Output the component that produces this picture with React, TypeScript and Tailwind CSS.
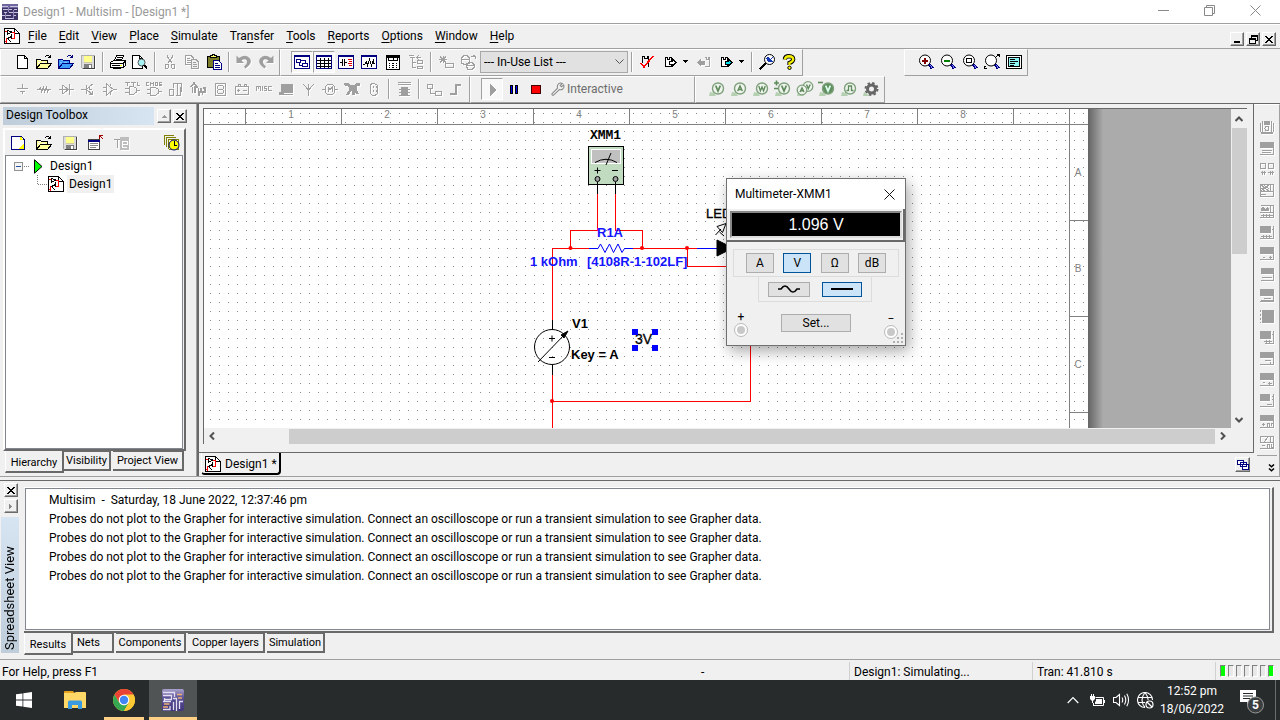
import React from "react";
import type { ReactNode } from "react";

type PProps = { d: string; c?: string; f?: string; w?: number };
const P = ({ d, c = "#000", f = "none", w = 1 }: PProps) => (
  <path d={d} stroke={c} fill={f} strokeWidth={w} />
);

function Ico({ children, s = 16, off = false, smooth = false }: { children: ReactNode; s?: number; off?: boolean; smooth?: boolean }) {
  return (
    <svg
      width={s}
      height={s}
      viewBox="0 0 16 16"
      shapeRendering={smooth ? "auto" : "crispEdges"}
      className={off ? "shrink-0 drop-shadow-[1px_1px_0_#fff]" : "shrink-0"}
      aria-hidden="true"
    >
      {children}
    </svg>
  );
}

const G = "#9f9f9f";
const N = "#000080";

function Tool({ label, children, wide = false, pressed = false, mid = false }: { label: string; children: ReactNode; wide?: boolean; pressed?: boolean; mid?: boolean }) {
  return (
    <button
      type="button"
      aria-label={label}
      title={label}
      className={
        "flex h-[22px] shrink-0 items-center justify-center gap-1 " +
        (wide ? "w-[34px] " : mid ? "w-6 " : "w-[22px] ") +
        (pressed ? "border border-b-white border-r-white border-l-[#a0a0a0] border-t-[#a0a0a0] bg-[#f8f8f8]" : "")
      }
    >
      {children}
    </button>
  );
}

const Sep = () => (
  <div className="flex w-2 shrink-0 justify-center">
    <div className="h-5 w-0.5 border-r border-white bg-[#a0a0a0]" />
  </div>
);

const Down = () => (
  <svg width="5" height="3" viewBox="0 0 5 3" shapeRendering="crispEdges" aria-hidden="true">
    <path d="M0 0H5V1H4V2H3V3H2V2H1V1H0Z" fill="#000" />
  </svg>
);

function Bar({ children, className = "" }: { children: ReactNode; className?: string }) {
  return (
    <div className={"flex h-[27px] shrink-0 items-center border-b border-l border-r border-t border-b-[#a0a0a0] border-l-white border-r-[#a0a0a0] border-t-white pb-0.5 pl-2.5 pr-0.5 " + className}>
      {children}
    </div>
  );
}

const DocIcon = () => (
  <Ico>
    <path d="M0.5 0.5H10.5L15.5 5.5V15.5H0.5Z" fill="#fff" stroke="#000" />
    <P d="M10.5 0.5V5.5H15.5" />
    <P d="M1 3.5H4M8 4.5H10.5V10.5H7M2.5 15V9.5M1 13.5H3" c="#f00" />
    <P d="M3.5 1.5V6.5M4 2.5L7.5 4L4 6" />
    <P d="M3.5 10.5L7.5 8.5M7.5 6V11M4 10.5L7 14" />
  </Ico>
);

const NewDoc = () => (
  <Ico>
    <P d="M3.5 1.5H10.5L13.5 4.5V14.5H3.5Z" f="#fff" />
    <P d="M10.5 1.5V4.5H13.5" />
  </Ico>
);

const OpenFolder = ({ a = "#ffff9c", b = "#000", l = "#fff" }: { a?: string; b?: string; l?: string }) => (
  <Ico>
    <P d="M0.5 14.5V5.5H4.5L5.5 6.5H11.5V9.5" f={a} c={b} />
    <P d="M0.5 14.5L4.5 9.5H15.5L11.5 14.5Z" f={a} c={b} />
    <P d="M2 8.5H4M3 6.5H5M6 8.5H9" c={l} />
    <P d="M8.5 3.5L10.5 1.5H12.5L14.5 3.5V1M14.5 3.5H11.5" c={b} />
  </Ico>
);

const Save = () => (
  <Ico off>
    <P d="M1.5 1.5H14.5V14.5H2.5L1.5 13.5Z" c="#b0b0b0" f="#dcdcdc" />
    <rect x="4" y="2" width="8" height="6" fill="#ffff8c" />
    <P d="M4 8.5H12" c="#d0c8a0" />
    <rect x="4" y="10" width="8" height="5" fill="#808080" />
    <rect x="9" y="11" width="2" height="3" fill="#fff" />
    <P d="M14.5 2V14.5H3" c="#404040" />
  </Ico>
);

const Lens = ({ kind }: { kind: "plus" | "minus" | "box" | "fit" }) => (
  <Ico>
    <circle cx="7" cy="6.5" r="5.5" fill="#fff" stroke="#000" shapeRendering="auto" />
    <P d="M11 10.5L14.5 14.5" c="#000080" w={3} />
    <P d="M12 11L14 13.5" c="#8080ff" />
    {kind === "plus" && <P d="M4 6.5H10M7 3.5V9.5" c="#800000" w={2} />}
    {kind === "minus" && <P d="M4 6.5H10" c="#008000" w={2} />}
    {kind === "box" && <P d="M4.5 4.5H9.5V8.5H4.5Z" />}
    {kind === "fit" && <P d="M13 0.5H15.5V3M0.5 12V14.5H3M12.5 2.5L15 1M0 14L2 12" />}
  </Ico>
);

const stdIcons: { label: string; icon: ReactNode }[][] = [
  [
    { label: "New", icon: <NewDoc /> },
    { label: "Open", icon: <OpenFolder /> },
    { label: "Open sample", icon: <OpenFolder a="#3f9cff" b="#00007f" l="#7fc4ff" /> },
    { label: "Save", icon: <Save /> },
  ],
  [
    {
      label: "Print",
      icon: (
        <Ico>
          <P d="M4.5 6.5L6.5 1.5H13.5L11.5 6.5" f="#fff" />
          <P d="M7 3.5H12M6 5.5H11" />
          <P d="M0.5 8.5L3.5 6.5H15.5V11.5L13.5 13.5H0.5Z" f="#fff" />
          <P d="M0.5 9.5H13.5V13M2 11.5H12M13.5 9L15.5 7" w={1} />
          <P d="M3 14.5H11" />
          <rect x="10" y="11" width="2" height="1" fill="#ff0" />
        </Ico>
      ),
    },
    {
      label: "Print preview",
      icon: (
        <Ico>
          <P d="M0.5 1.5H7.5L10.5 4.5V14.5H0.5Z" f="#fff" />
          <P d="M7.5 1.5V4.5H10.5" />
          <circle cx="9.5" cy="8.5" r="3.5" fill="#a8f4f4" stroke="#555" shapeRendering="auto" />
          <P d="M12 11L15 14.5" w={2} />
        </Ico>
      ),
    },
  ],
  [
    {
      label: "Cut",
      icon: (
        <Ico off>
          <P d="M5.5 1V3L10.5 9.5M10.5 1V3L5.5 9.5M3.5 10.5H6.5V13.5L5.5 14.5H3.5ZM9.5 10.5H12.5V14.5H10.5L9.5 13Z" c={G} />
        </Ico>
      ),
    },
    {
      label: "Copy",
      icon: (
        <Ico off>
          <P d="M1.5 1.5H7L9.5 4V10.5H1.5ZM3 4.5H6M3 6.5H7M3 8.5H7" c={G} />
          <P d="M7.5 5.5H12L14.5 8V14.5H7.5ZM9 8.5H12M9 10.5H13M9 12.5H13" c={G} f="#eee" />
        </Ico>
      ),
    },
    {
      label: "Paste",
      icon: (
        <Ico>
          <P d="M1.5 2.5H13.5V13.5H1.5Z" f="#7b7b29" />
          <P d="M4.5 3.5V1.5H6L7 0.5H8L9 1.5H10.5V3.5Z" f="#ffff6b" />
          <P d="M7.5 6.5H12.5L15.5 9.5V15.5H7.5Z" f="#fff" c={N} />
          <P d="M9 9.5H12M9 11.5H14M9 13.5H14" c={N} />
        </Ico>
      ),
    },
  ],
  [
    { label: "Undo", icon: <Ico off smooth><path d="M0.5 1.5V9H8L5.5 6.5Q9 4 10.8 6.5Q12 9.5 8 12.5L9.5 14.5Q17 9.5 14 4.5Q10 -.5 3 4Z" fill={G} /></Ico> },
    { label: "Redo", icon: <Ico off smooth><path d="M15.5 1.5V9H8L10.5 6.5Q7 4 5.2 6.5Q4 9.5 8 12.5L6.5 14.5Q-1 9.5 2 4.5Q6 -.5 13 4Z" fill={G} /></Ico> },
  ],
];

const frame = (kids: ReactNode) => (
  <Ico>
    <rect x="0.5" y="1.5" width="15" height="13" fill="#fff" stroke={N} />
    <P d="M0 2H16" c={N} w={2} />
    <P d="M15 1V15M0 14.5H16" c={N} w={1} />
    {kids}
  </Ico>
);

const MenuItems = ["File", "Edit", "View", "Place", "Simulate", "Transfer", "Tools", "Reports", "Options", "Window", "Help"];
const accel: Record<string, number> = { Transfer: 3 };

const comps: { n: string; k: ReactNode }[] = [
  { n: "Source", k: <P c={G} d="M8.5 3V7M3 7.5H14M6 10.5H11M8.5 11V13" /> },
  { n: "Basic", k: <P c={G} d="M1 8.5H3L4.5 6.5L5.5 10.5L7.5 6.5L8.5 10.5L10.5 6.5L11.5 10.5L12.5 8.5H15" /> },
  { n: "Diode", k: <P c={G} d="M1 8.5H16M4.5 4V13M5 4.5L10.5 8.5L5 12.5M11.5 3V14" /> },
  { n: "Transistor", k: <P c={G} d="M1 8.5H6M6.5 4V13M7 8L12 3.5H13M7 9L12.5 13.5M12.5 10V13.5H9M9.5 5V8H12" /> },
  { n: "Analog", k: <P c={G} d="M1 6.5H4M1 10.5H4M4.5 3V14L11.5 8.5ZM12 8.5H15M8.5 3V5M8.5 11V14" /> },
  { n: "TTL", k: <P c={G} d="M1 1.5H6M3.5 1V5M7 1.5H12M9.5 1V5M13.5 1V4.5H16M1 7.5H5M1 11.5H5M5.5 5.5H9L12.5 7.5V11L9 13.5H5.5ZM13 9.5H16" /> },
  { n: "CMOS", k: <P c={G} d="M3 1.5H0.5V4.5H3M4.5 5V1.5L6 3L7.5 1.5V5M9.5 1.5H11.5V4.5H9.5ZM16 1.5H13.5V3H15.5V4.5H13M1 8.5H4M1 12.5H4M4.5 6.5H9L12.5 8.5V12L9 14.5H4.5ZM13 10.5H16" /> },
  { n: "Misc digital", k: <P c={G} d="M1.5 8.5H5.5V14.5H1.5ZM5.5 6.5V2.5H13.5V10.5M9.5 2V14M8 14.5H13M12.5 6V14" w={1.5} /> },
  { n: "Mixed", k: <P c={G} d="M1 6L4 2L7 6H5V12M2.5 6V12M8.5 7V11H11V7M12.5 7H15V11H12.5V14M9 12V15" w={1.5} /> },
  { n: "Indicator", k: <P c={G} d="M3.5 2.5H13.5V14.5H3.5ZM6 4.5H11M6 8.5H11M6 12.5H11M5.5 5V8M11.5 5V8M5.5 9V12M11.5 9V12" /> },
  { n: "Power", k: <P c={G} d="M1.5 5.5H14.5V13.5H1.5ZM4.5 5V3H6V5M10.5 5V3H12V5M3 9.5H6M4.5 8V11M9 9.5H13" /> },
  { n: "Misc", k: <P c={G} d="M0.5 10V5.5H2.5V8M2.5 5.5H4.5V10M6.5 5V10M11 5.5H8.5V7.5H10.5V9.5H8M15.5 5.5H12.5V9.5H15.5" /> },
  { n: "Peripherals", k: <><rect x="3" y="3" width="12" height="9" fill={G} /><path d="M1 11H6V14H1Z" fill={G} /><P c={G} d="M3 13.5H15" /></> },
  { n: "RF", k: <P c={G} d="M8.5 15V3M3 3L8.5 9L14 3" /> },
  { n: "Electromechanical", k: <><P c={G} d="M0 8.5H3M13 8.5H16M3.5 5.5L5.5 3.5H10.5L12.5 5.5V11.5L10.5 13.5H5.5L3.5 11.5Z" /><P c={G} d="M6 11V6.5L8 8.5L10 6.5V11" /></> },
  { n: "NI component", k: <path d="M0 2H4L6 4H11L12 2H16V5H13V9L15 13H12L11 10V14H8V9L5 14H2L5 9V6L0 4Z" fill={G} /> },
  { n: "Connector", k: <P c={G} d="M5.5 2.5H8L11.5 4.5V12.5L9 14.5H6.5L4.5 12.5V4.5ZM7.5 5V7M7.5 9V11M10 5V7M10 9V11" /> },
];

const Probe = ({ t, sign }: { t: string; sign?: string }) => (
  <svg width="18" height="18" viewBox="0 0 18 18" aria-hidden="true" className="shrink-0">
    <path d="M2 12L1 16H8L6 13Z" fill="#b4d0b0" />
    <circle cx="10" cy="8.5" r="5.5" fill={t === "-V" ? "#5f8f5f" : "#eff5ee"} stroke="#7fa07c" strokeWidth="1.4" />
    {t === "P" ? (
      <path d="M6.5 10.5H8.5V6H11.5V10.5H13.5" fill="none" stroke="#5f8a5c" strokeWidth="1.3" />
    ) : t.endsWith("V") ? (
      <path d="M7.7 5.7L10 11L12.3 5.7" fill="none" stroke={t === "-V" ? "#dfe" : "#5f8a5c"} strokeWidth="1.7" />
    ) : t === "A" ? (
      <path d="M7.7 11L10 6L12.3 11M8.5 9.6H11.5" fill="none" stroke="#5f8a5c" strokeWidth="1.5" />
    ) : (
      <path d="M6.8 6L8.4 10.8L10 7L11.6 10.8L13.2 6" fill="none" stroke="#5f8a5c" strokeWidth="1.3" />
    )}
    {sign && <path d={sign} stroke="#5f8a5c" strokeWidth="1.6" fill="none" />}
  </svg>
);

const DualProbe = () => (
  <svg width="18" height="18" viewBox="0 0 18 18" aria-hidden="true" className="shrink-0">
    <path d="M2 12L1 16H8L6 13Z" fill="#b4d0b0" />
    <circle cx="12" cy="6.5" r="4.8" fill="#eff5ee" stroke="#7fa07c" strokeWidth="1.3" />
    <path d="M10.5 4.5L12.3 8.5L14.2 4.5" fill="none" stroke="#5f8a5c" strokeWidth="1.5" />
    <circle cx="6" cy="10" r="4.8" fill="#eff5ee" stroke="#7fa07c" strokeWidth="1.3" />
    <path d="M4 12L6 7.8L8 12M4.8 10.8H7.3" fill="none" stroke="#5f8a5c" strokeWidth="1.4" />
  </svg>
);

const RaisedBtn = ({ label, children, size = "h-[14px] w-[14px]" }: { label: string; children: ReactNode; size?: string }) => (
  <button
    type="button"
    aria-label={label}
    className={"flex shrink-0 items-center justify-center border border-b-[#696969] border-l-white border-r-[#696969] border-t-white bg-[#f0f0f0] shadow-[inset_-1px_-1px_0_#a0a0a0] " + size}
  >
    {children}
  </button>
);

const Cross = () => (
  <svg width="8" height="7" viewBox="0 0 8 7" shapeRendering="crispEdges" aria-hidden="true">
    <path d="M0 0H2V1H3V2H5V1H6V0H8V1H7V2H6V3H5V4H6V5H7V6H8V7H6V6H5V5H3V6H2V7H0V6H1V5H2V4H3V3H2V2H1V1H0Z" fill="#000" />
  </svg>
);

function TabBtn({ children, active = false, className = "" }: { children: ReactNode; active?: boolean; className?: string }) {
  return (
    <button
      type="button"
      role="tab"
      aria-selected={active}
      className={
        "shrink-0 whitespace-nowrap border-b-2 border-r-2 border-[#696969] bg-[#f0f0f0] text-center text-[11px] " +
        (active ? "h-[22px] border-l border-l-white pt-1 leading-4 " : "h-5 pt-0.5 leading-4 shadow-[inset_0_1px_0_#696969] ") +
        className
      }
    >
      {children}
    </button>
  );
}

const instruments: ReactNode[] = [
  <><P c={G} d="M1.5 4V13M3.5 2V14M14.5 4V13M12.5 2V14" /><path d="M5 2H11V6H5ZM2 13H14V15H2Z" fill={G} /><circle cx="8" cy="9.5" r="2" fill="none" stroke={G} /></>,
  <><path d="M1 2H15V8H1Z" fill={G} /><P c={G} d="M14.5 2V14.5H1M3 10.5H13M3 12.5H12" /></>,
  <><P c={G} d="M1.5 2.5H6.5V7.5H1.5ZM9.5 2.5H14.5V7.5H9.5ZM2 11.5H7M9 11.5H15M3.5 10V14M5.5 10V14M11.5 10V14M13.5 10V14" /></>,
  <><P c={G} d="M1.5 2.5H14.5V14.5H1.5ZM1 9.5H15M11.5 2V9M2 3L10 9M2 9L10 3M5 3L10 7M2 6L6 9M2 12.5H7" /></>,
  <><P c={G} d="M1.5 2.5H14.5V14.5H1M1 9.5H15M11.5 2V9M2 12.5H14M4.5 11V14M7.5 11V14M10.5 11V14" /><path d="M2 5L4 4L6 6L8 4L10 5V8H2Z" fill={G} /></>,
  <><path d="M1 2H12V9H1Z" fill={G} /><P c={G} d="M14.5 2V14.5H1M2 12.5H13M4.5 11V14M7.5 11V14M10.5 11V14M13 5.5H15" /></>,
  <><path d="M1 2H15V9H1Z" fill={G} /><P c={G} d="M14.5 2V14.5H1M4 12.5H6M10 12.5H13M11.5 11V14" /></>,
  <><path d="M2 2H15V8H2Z" fill={G} /><P c={G} d="M14.5 2V14.5H2M3 11.5H13" /></>,
  <><path d="M1 2H15V9H1Z" fill={G} /><P c={G} d="M14.5 2V14.5H1M5 11.5H12M2 13.5H14" /></>,
  <><path d="M3 2H15V15H3Z" fill={G} /><P c={G} d="M1.5 2V4M1.5 6V8M1.5 10V12M1.5 14V15" /></>,
  <><path d="M1 2H12V10H1Z" fill={G} /><P c={G} d="M14.5 2V14.5H6M5 12.5H13M7.5 11V14M10.5 11V14M13 5.5H15" /></>,
  <><path d="M1 2H15V8H1Z" fill={G} /><P c={G} d="M14.5 2V14.5H1M6 10.5H12M11.5 12V14" /></>,
  <><path d="M1 2H15V9H1Z" fill={G} /><P c={G} d="M14.5 2V14.5H1M4 11.5H6M9 12.5H13M10.5 11V14" /></>,
  <><path d="M1 2H11V9H1Z" fill={G} /><P c={G} d="M14.5 2V14.5H1M8 12.5H13M13 4.5H15M13 7.5H15" /></>,
  <><path d="M1 2H15V8H1Z" fill={G} /><P c={G} d="M14.5 2V14.5H1M3 11.5H6M4.5 10V13M8.5 14V10.5H10V14M12.5 10.5H14M12.5 10V13" /></>,
  <><P c={G} d="M1.5 2.5H14.5V8.5H1.5ZM5 8L9 3M11.5 2V8M14.5 8V14.5H1M3 11.5H6M8.5 14V10.5H10V14M12.5 10V13H14" /></>,
];

function Titlebar() {
  return (
    <header className="flex h-[23px] shrink-0 items-center bg-white pl-0.5 pr-0.5">
      <Ico>
        <rect width="16" height="16" fill="#3d3468" />
        <rect y="0" width="16" height="4" fill="#6f68a0" />
        <P d="M0 2.5H6M8 2.5H16M1 5.5H10M12 5.5H15M2 8.5H5M7 8.5H16M0 11.5H9M11 11.5H14M3 14.5H12" c="#c9c2dc" />
        <P d="M6.5 3V8M11.5 6V14M3.5 9V14" c="#8f87b8" />
      </Ico>
      <h1 className="ml-[5px] grow text-[#999999]">Design1 - Multisim - [Design1 *]</h1>
      <div className="flex items-center pb-0.5 text-[#999]">
        {[
          ["Minimize", "M0 5.5H11"],
          ["Restore", "M0.5 2.5H8.5V10.5H0.5ZM2.5 2.5V0.5H10.5V8.5H8.5"],
          ["Close", "M0.5 0.5L10.5 10.5M10.5 0.5L0.5 10.5"],
        ].map(([l, d]) => (
          <button key={l} type="button" aria-label={l} className="flex h-5 w-[46px] items-center justify-center">
            <svg width="11" height="11" viewBox="0 0 11 11" aria-hidden="true">
              <path d={d} fill="none" stroke="#888" />
            </svg>
          </button>
        ))}
      </div>
    </header>
  );
}

function Menubar() {
  return (
    <nav className="flex h-[26px] shrink-0 items-center border-b border-t border-[#a0a0a0] pl-1 pr-1 shadow-[inset_0_1px_0_#fff]">
      <DocIcon />
      <div className="flex grow gap-3 pl-2">
        {MenuItems.map((m) => {
          const i = accel[m] ?? 0;
          return (
            <button key={m} type="button">
              {m.slice(0, i)}
              <span className="underline underline-offset-2">{m[i]}</span>
              {m.slice(i + 1)}
            </button>
          );
        })}
      </div>
      <div className="flex gap-0.5 self-end pb-0.5">
        <RaisedBtn label="Minimize document">
          <svg width="8" height="8" shapeRendering="crispEdges" aria-hidden="true"><path d="M1 6H7V8H1Z" /></svg>
        </RaisedBtn>
        <RaisedBtn label="Restore document">
          <svg width="9" height="9" shapeRendering="crispEdges" aria-hidden="true"><path d="M2.5 3V1H8.5V5.5H6.5M0.5 4H6.5V8.5H0.5Z" fill="none" stroke="#000" /><path d="M2 0H9V2H2ZM0 3H7V5H0Z" /></svg>
        </RaisedBtn>
        <RaisedBtn label="Close document"><Cross /></RaisedBtn>
      </div>
    </nav>
  );
}

function Toolbars() {
  return (
    <div className="shrink-0">
      <div className="flex">
        <Bar>
          {stdIcons.map((g, i) => (
            <React.Fragment key={i}>
              {i > 0 && <Sep />}
              {g.map((t) => (
                <Tool key={t.label} label={t.label}>{t.icon}</Tool>
              ))}
            </React.Fragment>
          ))}
        </Bar>
        <Bar>
          <Tool label="Design toolbox" pressed>
            {frame(<P d="M2.5 5.5H6.5V8.5H2.5ZM8.5 9.5H13.5V12.5H8.5ZM5 8.5V11.5H8M11 9V6.5H7" c={N} />)}
          </Tool>
          <Tool label="Spreadsheet view" pressed>
            {frame(<P d="M1 6.5H15M1 9.5H15M1 12.5H15M4.5 4V14M8.5 4V14M12.5 4V14" />)}
          </Tool>
          <Tool label="SPICE netlist">
            {frame(<><P d="M2 8.5H4M4.5 5V12M6.5 5V12M7 8.5H9" /><P d="M10 5.5H14M11 7.5H14M10 9.5H14M11 11.5H14" c="#d00" /></>)}
          </Tool>
          <Tool label="Grapher" mid>{frame(<P d="M2 10.5H3.5L5.5 7.5L6.5 11.5L8.5 5.5L10.5 11.5L12.5 5.5V9H14" />)}</Tool>
          <Tool label="Postprocessor" mid>
            <Ico><P d="M1.5 1.5H14.5V15.5H1.5Z" f="#fff" /><P d="M2 2.5H14" w={2} /><P d="M3 6.5H13M4 9.5H5M7 9.5H9M11 9.5H12M4 11.5H5M7 11.5H9M11 11.5H12M4 13.5H5M7 13.5H9M11 13.5H12M3.5 4V6M8 4V6M12.5 4V6" /></Ico>
          </Tool>
          <Tool label="Parent sheet">
            <Ico off><P c={G} d="M1.5 3.5H6.5M4.5 4V13.5H8M4.5 8.5H8M9.5 6.5H14.5V9.5H9.5ZM9.5 12.5H14.5V14.5H9.5ZM9 3.5H13M11 1L9 3.5L11 6M1 1.5H6" /></Ico>
          </Tool>
          <Sep />
          <Tool label="Component wizard">
            <Ico off><P c={G} d="M1 5.5H9M5 1.5V9M2 2.5L8 8.5M8 2.5L2 8.5M7.5 9.5H15.5V13.5H7.5Z" /></Ico>
          </Tool>
          <Tool label="Database manager">
            <Ico off><P c={G} d="M1.5 3.5L4 1.5H7L9.5 3.5V9L7 10.5H4L1.5 9ZM2 5.5H9M9 8.5H12L14.5 10.5V13L12 15.5H8L6.5 13V10ZM7 11.5H14M11 2.5H15M13 1L15.5 3V5" w={1.3} /></Ico>
          </Tool>
          <div className="relative ml-px h-[22px]">
            <select aria-label="In-use list" className="h-[22px] w-[148px] appearance-none border border-[#a8a8a8] bg-[#e1e1e1] pl-[3px] text-[12px] leading-[18px] text-black">
              <option>--- In-Use List ---</option>
            </select>
            <svg className="pointer-events-none absolute right-1 top-2" width="9" height="6" viewBox="0 0 9 6" aria-hidden="true"><path d="M0.5 0.5L4.5 4.5L8.5 0.5" fill="none" stroke="#555" /></svg>
          </div>
          <Sep />
          <Tool label="Electrical rules check">
            <Ico><P d="M3.5 9V2.5H5.5V4H8V2.5H9.5V13" /><P d="M2 9L5 13L14 2" c="#f00" w={1.6} /></Ico>
          </Tool>
          <Tool label="Transfer to layout" wide>
            <Ico><P d="M2.5 3.5H4.5V5H6.5V3.5H8.5V12.5H2.5Z" f="#fff" /><P d="M6.5 7.5H9.5V5L13 8.5L9.5 12V10H6.5Z" f="#fff" /></Ico><Down />
          </Tool>
          <Tool label="Backannotate">
            <Ico off><P c={G} d="M9.5 3.5H11V5H13V3.5H14.5V12.5H9.5" /><path d="M2 8.5L6 4V7H10V11H6V13Z" fill={G} /></Ico>
          </Tool>
          <Tool label="Forward annotate" wide>
            <Ico><P d="M2.5 3.5H4.5V5H6.5V3.5H8.5V12.5H2.5Z" f="#fff" /><P d="M6.5 7.5H9.5V5L13 8.5L9.5 12V10H6.5Z" f="#00e0f0" /></Ico><Down />
          </Tool>
          <Sep />
          <Tool label="Find examples">
            <Ico><circle cx="10.5" cy="5.5" r="5" fill="#fff" stroke="#000" shapeRendering="auto" /><P d="M0.5 15.5L6.5 9.5" w={2} /><path d="M7 4L9 3L11 5L14 3L12 6L14 8H11L9 8Z" fill="#1438b0" /></Ico>
          </Tool>
          <Tool label="Help">
            <Ico smooth><path d="M3.8 5.5Q4 2.2 8 2.2Q12.2 2.3 12.2 5.5Q12 7.5 8.5 9V11" fill="none" stroke="#000" strokeWidth="4.2" /><path d="M3.8 5.5Q4.5 2.2 8 2.2Q12.2 2.3 12.2 5.5Q12 7.5 8.5 9V11" fill="none" stroke="#f4f000" strokeWidth="2.4" /><circle cx="8.5" cy="13.8" r="1.7" fill="#f4f000" stroke="#000" /></Ico>
          </Tool>
        </Bar>
        <Bar className="ml-[101px]">
          <Tool label="Zoom in"><Lens kind="plus" /></Tool>
          <Tool label="Zoom out"><Lens kind="minus" /></Tool>
          <Tool label="Zoom area"><Lens kind="box" /></Tool>
          <Tool label="Zoom sheet"><Lens kind="fit" /></Tool>
          <Tool label="Full screen">
            <Ico><P d="M0.5 1.5H15.5V14.5H0.5Z" f="#fff" /><P d="M2.5 3.5H13.5V12.5H2.5Z" f="#8ff4f4" /><P d="M4 5.5H9M4 7.5H12M4 9.5H9M4 11.5H8" /></Ico>
          </Tool>
        </Bar>
      </div>
      <div className="flex border-b border-[#696969]">
        <Bar>
          {comps.map((c) => (
            <Tool key={c.n} label={c.n}><Ico off>{c.k}</Ico></Tool>
          ))}
          <Sep />
          <Tool label="MCU">
            <Ico off><path d="M5 6H12V15H5Z" fill={G} /><P c={G} d="M2 1.5H15M2 3.5H15M3 8.5H14M3 11.5H14M3 14.5H14" w={1} /></Ico>
          </Tool>
          <Sep />
          <Tool label="Hierarchical block"><Ico off><P c={G} d="M1.5 3.5H6.5V7.5H1.5ZM9.5 10.5H15.5V14.5H9.5ZM4.5 8V12.5H9" /></Ico></Tool>
          <Tool label="Bus"><Ico off><P c={G} w={2} d="M2 13H8V4H13" /></Ico></Tool>
        </Bar>
        <Bar className="w-[225px]">
          <Tool label="Run" pressed><Ico off><path d="M6 3L12 9L6 15Z" fill={G} /></Ico></Tool>
          <Tool label="Pause"><Ico><path d="M4 4H7V13H4ZM9 4H12V13H9Z" fill="#000" /><path d="M5 5H6V12H5ZM10 5H11V12H10Z" fill="#00f" /></Ico></Tool>
          <Tool label="Stop"><Ico><rect x="3.5" y="4.5" width="9" height="8" fill="#f00" stroke="#400" /></Ico></Tool>
          <button type="button" className="ml-1 flex items-center gap-0.5 text-[#6d6d6d]">
            <Ico s={14} smooth><path d="M1 13.5L7.5 7Q6.5 3.5 9 1.8Q11 .8 13 1.6L10.5 4L12 5.5L14.5 3.3Q15.5 6 13.5 8Q11.8 9.3 9.5 8.7L3 15Q1 15.5 1 13.5Z" fill="none" stroke="#888" strokeWidth="1.2" /></Ico>
            Interactive
          </button>
        </Bar>
        <Bar>
          <Tool label="Voltage probe"><Probe t="V" /></Tool>
          <Tool label="Current probe"><Probe t="A" /></Tool>
          <Tool label="Power probe"><Probe t="W" /></Tool>
          <Tool label="Differential probe"><Probe t="+V" sign="M0 3H5M2.5 0.5V5.5M0 8.5H4" /></Tool>
          <Tool label="Voltage and current probe"><DualProbe /></Tool>
          <Tool label="Reference probe"><Probe t="-V" sign="M0 2.5H5" /></Tool>
          <Tool label="Digital probe"><Probe t="P" /></Tool>
          <Tool label="Probe settings">
            <Ico smooth><path d="M1 11L0 15H7Z" fill="#b4d0b0" /><circle cx="8.5" cy="8" r="4" fill="none" stroke="#666" strokeWidth="3" /><circle cx="8.5" cy="8" r="6" fill="none" stroke="#666" strokeWidth="2" strokeDasharray="2.4 2.31" /></Ico>
          </Tool>
        </Bar>
      </div>
    </div>
  );
}

function DesignToolbox() {
  return (
    <aside className="flex w-[197px] shrink-0 flex-col border-r border-[#a0a0a0] pl-[3px] pt-[3px]">
      <div className="flex h-[18px] items-center gap-0.5 pr-[9px]">
        <h2 className="mr-px h-[18px] grow bg-linear-to-r from-[#bfcddb] to-[#d7e4f2] pl-[3px] leading-[17px]">Design Toolbox</h2>
        <RaisedBtn label="Collapse"><svg width="5" height="3" shapeRendering="crispEdges" aria-hidden="true"><path d="M2 0H3V1H4V2H5V3H0V2H1V1H2Z" fill="#999" /></svg></RaisedBtn>
        <RaisedBtn label="Close toolbox"><Cross /></RaisedBtn>
      </div>
      <div className="mr-2.5 mt-[3px] flex min-h-0 grow flex-col border-2 border-b-[#696969] border-l-white border-r-[#696969] border-t-white">
        <div className="flex h-[25px] shrink-0 items-center gap-2.5 pl-[5px] pr-1">
          <button type="button" aria-label="New design"><Ico><P d="M1.5 1.5H11.5L14.5 5V14.5H1.5Z" f="#fff" c={N} /><path d="M8 14L14 8V14ZM10 2L12 2L13 5H10Z" fill="#ff0" /></Ico></button>
          <button type="button" aria-label="Open design"><OpenFolder /></button>
          <button type="button" aria-label="Save design"><Save /></button>
          <button type="button" aria-label="Rename"><Ico><rect x="0.5" y="4.5" width="11" height="10" fill="#fff" stroke="#444" /><P d="M0 5.5H12" c={N} w={2} /><P d="M2 8.5H10M2 10.5H10M2 12.5H8" c="#888" /><P d="M15 4L12 1M11.5 4V0.5H15" c="#a00000" /></Ico></button>
          <button type="button" aria-label="Label"><Ico off><rect x="6" y="2" width="9" height="13" fill="#bdbdbd" /><P d="M0 4.5H6M3.5 5V13" c={G} /><P d="M8 9.5H13V6.5H8.5V12.5H13" c="#fff" /></Ico></button>
          <button type="button" aria-label="Versions" className="ml-auto"><Ico><P d="M0.5 10V0.5H10M2.5 12V2.5H12" c="#808000" /><P d="M4.5 14V4.5H14V14.5H5" c="#808000" f="#ffffc0" /><circle cx="10" cy="10" r="5" fill="#ff0" stroke="#000080" shapeRendering="auto" /><P d="M10.5 6V10.5H13" /></Ico></button>
        </div>
        <ul className="mr-px grow border border-[#828790] bg-white pt-px leading-[18px]">
          <li className="flex items-center pl-2">
            <svg width="18" height="18" shapeRendering="crispEdges" aria-hidden="true"><rect x="0.5" y="5.5" width="8" height="8" fill="#f4f4f4" stroke="#919191" /><path d="M2 9.5H7" stroke="#2a50a0" /><path d="M10 9.5H16" stroke="#808080" strokeDasharray="1 1" /></svg>
            <svg className="ml-0.5" width="9" height="15" aria-hidden="true"><path d="M0.5 0.8L8 7.5L0.5 14.2Z" fill="#0f0" stroke="#000" /></svg>
            <span className="ml-[7px]">Design1</span>
          </li>
          <li className="flex items-center pl-[31px]">
            <svg width="11" height="18" shapeRendering="crispEdges" aria-hidden="true"><path d="M0.5 0V9.5H11" fill="none" stroke="#808080" strokeDasharray="1 1" /></svg>
            <DocIcon />
            <span className="ml-[3px] bg-[#f0f0f0] px-0.5">Design1</span>
          </li>
        </ul>
      </div>
      <div role="tablist" className="mb-[3px] ml-0.5 flex items-start gap-0.5">
        <TabBtn active className="-mr-0.5 w-[59px]">Hierarchy</TabBtn>
        <TabBtn className="w-[47px]">Visibility</TabBtn>
        <TabBtn className="w-[71px]">Project View</TabBtn>
      </div>
    </aside>
  );
}

const columns = [1, 2, 3, 4, 5, 6, 7, 8];
const rows = ["A", "B", "C"];

function Schematic() {
  return (
    <svg width="884" height="320" viewBox="204 109 884 320" className="h-full shrink-0 bg-white" preserveAspectRatio="xMinYMin slice" role="img" aria-label="Schematic">
      <defs>
        <pattern id="grid" x="210" y="113" width="9" height="9" patternUnits="userSpaceOnUse">
          <rect width="1" height="1" fill="#8c8c8c" />
        </pattern>
      </defs>
      <rect x="204" y="109" width="884" height="320" fill="#fff" />
      <rect x="204" y="109" width="884" height="313" fill="url(#grid)" />
      <g shapeRendering="crispEdges" stroke="#808080" fill="none">
        <path d="M204 124.5H1088M1069.5 109V429" />
        {[245, 341, 437, 533, 629, 725, 821, 917, 1013].map((x) => (
          <path key={x} d={`M${x}.5 109V124`} />
        ))}
        {[220, 316, 412].map((y) => (
          <path key={y} d={`M1069 ${y}.5H1088`} />
        ))}
      </g>
      <g fontFamily="Liberation Sans, sans-serif" fontSize="10" fill="#808080" textAnchor="middle">
        {columns.map((n, i) => (
          <text key={n} x={291 + i * 96} y="118">{n}</text>
        ))}
        {rows.map((n, i) => (
          <text key={n} x="1078" y={176 + i * 96}>{n}</text>
        ))}
      </g>
      <g shapeRendering="crispEdges" fill="none" stroke="#f00">
        <path d="M597.5 194V230.5H570.5V248M615.5 194V230.5H642.5V248" />
        <path d="M552.5 320V248.5H590M633 248.5H697M687.5 248V266.5H750.5V401.5H552.5M552.5 375V429" />
      </g>
      <g fill="#f00">
        {[[570.5, 248], [642, 248], [687, 248], [552, 401]].map(([x, y]) => (
          <circle key={x} cx={x} cy={y} r="2" />
        ))}
      </g>
      <g stroke="#00f" fill="none">
        <path d="M589 248.5H598L600.5 244L605 252.5L609.5 244L613.5 252.5L618 244L622 252.5L624.5 248.5H633" />
        <path d="M697 248.5H718" />
      </g>
      <path d="M717 240V256L733 248Z" fill="#000" stroke="#000" />
      <path d="M715.5 235L721 229M717 226.5L726 223.5L722.5 232.5ZM719.5 232L724 236" fill="none" stroke="#000" />
      <g stroke="#000" fill="none">
        <path d="M597.5 185V194M615.5 185V194" />
        <rect x="588.5" y="146.5" width="35" height="38" fill="#c1dbc1" />
        <rect x="591.5" y="149.5" width="29" height="14" fill="#c0c0c0" stroke="#fff" />
        <path d="M595 162.5Q606 156 617 162.5M606 165L611 153" />
        <path d="M594.5 170.5H600.5M597.5 167.5V173.5M612 170.5H618" />
        <circle cx="597.5" cy="179" r="2.5" fill="#a0a0a0" />
        <circle cx="615.5" cy="179" r="2.5" fill="#a0a0a0" />
        <path d="M597.5 182V185M615.5 182V185" />
        <circle cx="552" cy="347" r="17.5" />
        <path d="M552.5 320V330M552.5 364.5V375M538 362L566 333M549 338.5H555M552 335.5V341.5M549 357.5H555" />
        <path d="M561 335L568 331L564 338Z" fill="#000" />
      </g>
      <text x="605.5" y="139" textAnchor="middle" fontFamily="Liberation Mono, monospace" fontWeight="bold" fontSize="13">XMM1</text>
      <g fontFamily="Liberation Sans, sans-serif" fontSize="13" fontWeight="bold">
        <g fill="#1414ff">
          <text x="597" y="237">R1A</text>
          <text x="530" y="266">1 kOhm</text>
          <text x="587" y="266">[4108R-1-102LF]</text>
        </g>
        <text x="572" y="328">V1</text>
        <text x="571" y="359">Key = A</text>
        <text x="635" y="344" fontWeight="normal" fontSize="14" stroke="#000" strokeWidth="0.3">3V</text>
        <text x="706" y="218" fontWeight="normal" stroke="#000" strokeWidth="0.3">LED1</text>
      </g>
      <path d="M632 329H638V335H632ZM652 329H658V335H652ZM632 345H638V351H632ZM652 345H658V351H652Z" fill="#00f" />
    </svg>
  );
}

function MeterBtn({ children, on = false, className = "", label }: { children: ReactNode; on?: boolean; className?: string; label?: string }) {
  return (
    <button type="button" aria-label={label} aria-pressed={on} className={"flex items-center justify-center border leading-none " + (on ? "border-[#005499] bg-[#cce4f7] " : "border-[#adadad] bg-[#e1e1e1] ") + className}>
      {children}
    </button>
  );
}

function Multimeter() {
  return (
    <section aria-label="Multimeter-XMM1" className="absolute left-[527px] top-[74px] w-[180px] border border-[#707070] bg-[#f0f0f0] pb-[7px] shadow-[3px_5px_14px_rgba(0,0,0,0.35)]">
      <div className="flex h-[30px] items-center justify-between bg-white pl-2 pr-2.5">
        <h2>Multimeter-XMM1</h2>
        <button type="button" aria-label="Close multimeter">
          <svg width="11" height="11" viewBox="0 0 11 11" aria-hidden="true"><path d="M0.5 0.5L10.5 10.5M10.5 0.5L0.5 10.5" stroke="#111" fill="none" /></svg>
        </button>
      </div>
      <div className="border-b-2 border-r-2 border-[#696969] bg-[#f0f0f0] py-0.5 pl-[3px] pr-px">
        <output className="block h-[27px] border-2 border-b-[#ddd] border-l-[#888] border-r-[#ddd] border-t-[#888] bg-black text-center font-['Liberation_Sans',sans-serif] text-[16px] leading-[23px] text-white">1.096 V</output>
      </div>
      <div className="ml-1.5 mr-1.5 mt-[7px] flex h-7 items-center justify-between border border-[#dcdcdc] px-3">
        <MeterBtn className="h-5 w-7">A</MeterBtn>
        <MeterBtn on className="h-5 w-7">V</MeterBtn>
        <MeterBtn className="h-5 w-7">Ω</MeterBtn>
        <MeterBtn className="h-5 w-7">dB</MeterBtn>
      </div>
      <div className="ml-[31px] flex h-[25px] w-[114px] items-center justify-between border border-t-0 border-[#dcdcdc] px-[9px]">
        <MeterBtn label="AC" className="h-[15px] w-[42px]"><svg width="22" height="8" aria-hidden="true"><path d="M0 4H3Q7 -2 11 4Q15 10 19 4H22" fill="none" stroke="#000" strokeWidth="1.5" /></svg></MeterBtn>
        <MeterBtn label="DC" on className="h-[15px] w-10"><svg width="22" height="2" aria-hidden="true"><path d="M0 0H22V2H0Z" /></svg></MeterBtn>
      </div>
      <div className="flex items-start justify-between px-[7px] pt-2">
        <label className="flex w-3.5 flex-col items-center leading-[14px]">+
          <input type="radio" name="pos" className="h-3 w-3 appearance-none rounded-full border-2 border-white bg-[#c8c8c8] outline outline-[#bbb]" />
        </label>
        <MeterBtn className="mt-1 h-[18px] w-[70px]">Set...</MeterBtn>
        <label className="flex w-3.5 flex-col items-center pt-0.5 leading-[14px]">−
          <input type="radio" name="neg" className="h-3 w-3 appearance-none rounded-full border-2 border-white bg-[#c8c8c8] outline outline-[#bbb]" />
        </label>
      </div>
      <svg className="absolute bottom-0.5 right-0.5" width="10" height="10" shapeRendering="crispEdges" aria-hidden="true"><path d="M8 0H10V2H8ZM4 4H6V6H4ZM8 4H10V6H8ZM0 8H2V10H0ZM4 8H6V10H4ZM8 8H10V10H8Z" fill="#b0b0b0" /></svg>
    </section>
  );
}

const Chev = ({ d }: { d: string }) => (
  <svg width="8" height="8" viewBox="0 0 8 8" aria-hidden="true"><path d={d} fill="none" stroke="#505050" strokeWidth="2" /></svg>
);

function Workspace() {
  return (
    <main className="relative flex min-w-0 grow flex-col border-l-2 border-[#696969]">
      <div className="flex min-h-0 grow flex-col border-b border-r border-[#696969] pb-2 pl-1 pr-1.5 pt-1">
        <div className="flex min-h-0 grow border-l border-t border-[#696969]">
          <div className="flex min-w-0 grow overflow-hidden bg-[#ababab]">
            <Schematic />
            <div className="w-[15px] shrink-0 bg-linear-to-r from-[#646464] to-[#ababab]" />
          </div>
          <div className="flex w-4 shrink-0 flex-col items-center bg-[#f0f0f0] pb-1">
            <button type="button" aria-label="Scroll up" className="flex h-[19px] items-center"><Chev d="M0.5 6L4 2.5L7.5 6" /></button>
            <div className="h-[126px] w-[15px] self-end bg-[#cdcdcd]" />
            <button type="button" aria-label="Scroll down" className="mt-auto"><Chev d="M0.5 2L4 5.5L7.5 2" /></button>
          </div>
        </div>
        <div className="mr-4 flex h-4 shrink-0 items-center border-l border-[#696969] bg-[#f0f0f0] px-1">
          <button type="button" aria-label="Scroll left"><Chev d="M6 0.5L2.5 4L6 7.5" /></button>
          <div className="ml-[73px] mr-1 h-[15px] grow bg-[#cdcdcd]" />
          <button type="button" aria-label="Scroll right"><Chev d="M2 0.5L5.5 4L2 7.5" /></button>
        </div>
      </div>
      <div className="flex h-[23px] shrink-0 items-start justify-between pl-0.5 pr-1">
        <button type="button" role="tab" aria-selected className="flex h-[22px] items-center gap-1 rounded-b-sm border-b-2 border-l border-r-2 border-b-black border-l-white border-r-black bg-[#f0f0f0] pl-[3px] pr-0.5 pt-px">
          <DocIcon />Design1 *
        </button>
        <RaisedBtn label="Window list" size="mt-1 h-[15px] w-[15px]">
          <svg width="12" height="11" shapeRendering="crispEdges" aria-hidden="true"><path d="M0.5 1.5H6.5V5.5H0.5ZM3.5 3.5H9.5V7.5H3.5ZM5.5 5.5H11.5V10.5H5.5Z" fill="#fff" stroke="#000080" /></svg>
        </RaisedBtn>
      </div>
      <Multimeter />
    </main>
  );
}

function InstrumentStrip() {
  return (
    <div className="flex w-[26px] shrink-0 flex-col items-center overflow-hidden border-r border-t border-r-[#a0a0a0] border-t-white pt-[11px]">
      {instruments.map((k, i) => (
        <button key={i} type="button" aria-label={`Instrument ${i + 1}`} className="flex h-[21px] shrink-0 items-center"><Ico off>{k}</Ico></button>
      ))}
      <div className="mt-[3px] h-px w-5 shrink-0 bg-[#a0a0a0]" />
      <button type="button" aria-label="More instruments" className="mr-1 mt-2 self-end">
        <svg width="7" height="8" viewBox="0 0 7 8" aria-hidden="true"><path d="M1 0.5L3.5 2.8L6 0.5M1 4.5L3.5 6.8L6 4.5" fill="none" stroke="#000" strokeWidth="1.5" /></svg>
      </button>
    </div>
  );
}

const probeMsg = "Probes do not plot to the Grapher for interactive simulation. Connect an oscilloscope or run a transient simulation to see Grapher data.";

function SpreadsheetView() {
  return (
    <section className="flex h-[179px] shrink-0 border-t border-[#696969]">
      <div className="flex w-[21px] shrink-0 flex-col items-center gap-0.5 pt-0.5">
        <RaisedBtn label="Close spreadsheet"><Cross /></RaisedBtn>
        <RaisedBtn label="Expand spreadsheet"><svg width="3" height="5" shapeRendering="crispEdges" aria-hidden="true"><path d="M0 0H1V1H2V2H3V3H2V4H1V5H0Z" fill="#888" /></svg></RaisedBtn>
        <h2 className="mb-1.5 mr-px mt-0.5 w-[18px] grow rotate-180 bg-linear-to-b from-[#bfcddb] to-[#d7e4f2] pt-[3px] text-[13px] leading-[18px] [writing-mode:vertical-rl]">Spreadsheet View</h2>
      </div>
      <div className="ml-[3px] mr-1.5 mt-1.5 flex min-w-0 grow flex-col">
        <div className="flex grow border-b-2 border-r-2 border-t border-b-[#696969] border-r-[#696969] border-t-white pb-px pl-px pr-0.5">
          <div className="grow border border-[#828790] bg-white pl-[23px] pt-0.5 leading-[19px]">
            <p className="whitespace-pre">Multisim  -  Saturday, 18 June 2022, 12:37:46 pm</p>
            {[0, 1, 2, 3].map((i) => (
              <p key={i} className="whitespace-nowrap">{probeMsg}</p>
            ))}
          </div>
        </div>
        <div role="tablist" className="mb-1 flex items-start gap-0.5">
          <TabBtn active className="-mr-0.5 w-[49px]">Results</TabBtn>
          <TabBtn className="w-[41px] pl-1 text-left">Nets</TabBtn>
          <TabBtn className="w-[70px]">Components</TabBtn>
          <TabBtn className="w-[77px]">Copper layers</TabBtn>
          <TabBtn className="w-[58px]">Simulation</TabBtn>
        </div>
      </div>
    </section>
  );
}

function StatusBar() {
  return (
    <footer className="flex h-[21px] shrink-0 items-stretch border-t border-[#a0a0a0] pl-0.5 pt-0.5 leading-[20px]">
      <div className="grow">For Help, press F1</div>
      <div className="w-[148px]">-</div>
      <div className="w-[183px] border-l border-[#d0d0d0] pl-1">Design1: Simulating...</div>
      <div className="w-[183px] border-l border-[#d0d0d0] pl-1">Tran: 41.810 s</div>
      <div className="flex w-[65px] items-center gap-0.5 border-l border-[#d0d0d0] pl-1">
        {[1, 0, 0, 0, 0, 0, 1].map((v, i) => (
          <span key={i} className={"h-3 w-1.5 border border-b-white border-l-[#808080] border-r-white border-t-[#808080] " + (v ? "bg-[#0f0]" : "bg-[#e8e8e8]")} />
        ))}
      </div>
    </footer>
  );
}

function Taskbar() {
  return (
    <div className="flex h-10 shrink-0 items-stretch bg-[#272b2c] text-white">
      <button type="button" aria-label="Start" className="flex w-12 items-center justify-center">
        <svg width="16" height="16" viewBox="0 0 16 16" aria-hidden="true"><path d="M0 2.3L6.5 1.4V7.6H0ZM7.3 1.3L16 0V7.6H7.3ZM0 8.4H6.5V14.6L0 13.7ZM7.3 8.4H16V16L7.3 14.7Z" fill="#fff" /></svg>
      </button>
      <button type="button" aria-label="File Explorer" className="ml-[3px] flex w-12 items-center justify-center">
        <svg width="22" height="18" viewBox="0 0 22 18" aria-hidden="true"><path d="M0 1Q0 0 1 0H9L10.5 2H0Z" fill="#e5a41c" /><path d="M0 2H10L12 1H21Q22 1 22 2V17H0Z" fill="#ffd968" /><path d="M4 18V11Q4 9.5 5.5 9.5H16.5Q18 9.5 18 11V18H14V14H8V18Z" fill="#3b9be0" /></svg>
      </button>
      <div className="flex w-[50px] justify-center">
        <button type="button" aria-label="Chrome" className="flex w-10 items-center justify-center border-b-[3px] border-[#ffd083] pt-[3px]">
          <svg width="22" height="22" viewBox="0 0 22 22" aria-hidden="true">
            <circle cx="11" cy="11" r="11" fill="#fcc934" />
            <path d="M11 11L6.2 13.8L1.5 5.5A11 11 0 0 1 20.5 5.5H11Z" fill="#ea4335" />
            <path d="M11 22A11 11 0 0 1 1.5 5.5L6.2 13.8L11 16.5L15.8 13.7Z" fill="#34a853" />
            <path d="M11 22L15.8 13.7L16 11L20.5 5.5A11 11 0 0 1 11 22Z" fill="#fcc934" />
            <circle cx="11" cy="11" r="5.3" fill="#fff" /><circle cx="11" cy="11" r="4.2" fill="#4285f4" />
          </svg>
        </button>
      </div>
      <button type="button" aria-label="Multisim" className="flex w-12 items-center justify-center border-b-[3px] border-[#ffd083] bg-[#505455] pt-[3px]">
        <svg width="22" height="22" viewBox="0 0 22 22" aria-hidden="true">
          <defs>
            <linearGradient id="ms" x1="0" y1="0" x2="0" y2="1"><stop offset="0" stopColor="#a9a3cc" /><stop offset="0.4" stopColor="#5a5096" /><stop offset="1" stopColor="#41367c" /></linearGradient>
          </defs>
          <rect width="22" height="22" rx="2" fill="url(#ms)" />
          <g fill="none" stroke="#e4dff2" strokeWidth="1.3"><path d="M1 3.5H12.5V8M1 6.5H9.5V10.5H3M2.5 9V12M14.5 22V9.5H11M17.5 20V12.5H21M1 20.5H8V17M11.5 13V21M1 12.5H9" /><path d="M15 5.5H20M2 15H7.5M1 18H6M16 9H20" stroke="#f0b070" strokeWidth="1.5" /></g>
        </svg>
      </button>
      <div className="ml-auto flex items-center">
        <button type="button" aria-label="Show hidden icons" className="flex w-6 justify-center"><svg width="12" height="8" aria-hidden="true"><path d="M0.7 7L6 1.5L11.3 7" fill="none" stroke="#fff" strokeWidth="1.2" /></svg></button>
        <button type="button" aria-label="Battery" className="flex w-6 justify-center"><svg width="17" height="13" viewBox="0 0 17 13" aria-hidden="true"><path d="M4.5 11.5V9M6.5 3.5H14.5V11.5H4M15.5 6V9" fill="none" stroke="#fff" /><path d="M7 5H13V10H6V8L7 7ZM1 2H6V5L4 7V9H3V7L1 5Z" fill="#fff" /><path d="M2.5 0V2M4.5 0V2" stroke="#fff" /></svg></button>
        <button type="button" aria-label="Volume" className="flex w-6 justify-center"><svg width="17" height="14" viewBox="0 0 17 14" aria-hidden="true"><path d="M0.5 4.5H3L6.5 1.5V12.5L3 9.5H0.5ZM9 4.5Q10.5 7 9 9.5M11.5 2.5Q14 7 11.5 11.5M13.8 0.8Q17.3 7 13.8 13.2" fill="none" stroke="#fff" strokeWidth="1.1" /></svg></button>
        <button type="button" aria-label="Network" className="flex w-6 justify-center"><svg width="17" height="17" viewBox="0 0 17 17" aria-hidden="true"><path d="M8 15.5A7.5 7.5 0 1 1 15.5 8M8 15.5Q2 8 8 0.5Q11.5 5 11 8M1 5.5H15M1 10.5H8" fill="none" stroke="#fff" strokeWidth="1.1" /><circle cx="12.5" cy="12.5" r="3.5" fill="none" stroke="#fff" strokeWidth="1.2" /><path d="M10 10L15 15" stroke="#fff" strokeWidth="1.2" /></svg></button>
        <div className="w-[70px] text-center leading-[18px]">12:52 pm<br />18/06/2022</div>
        <button type="button" aria-label="5 notifications" className="relative ml-[13px] h-8 w-[35px]">
          <svg width="28" height="28" viewBox="0 0 28 28" className="mt-1" aria-hidden="true">
            <path d="M0 2H16V14H10L7 17V14H0Z" fill="#fff" /><path d="M3 5.5H13M3 8H13M3 10.5H10" stroke="#272b2c" />
            <circle cx="15.5" cy="17" r="8" fill="#3a3e3f" stroke="#999" />
          </svg>
          <span className="absolute left-[12px] top-[13px] text-[12px] font-bold leading-4">5</span>
        </button>
        <div className="h-10 w-[5px] border-l border-[#6a6d6e]" />
      </div>
    </div>
  );
}

export default function App() {
  return (
    <div className="flex h-screen flex-col overflow-hidden bg-[#f0f0f0] font-['Roboto','Open_Sans',sans-serif] text-[12px] leading-4 text-black">
      <Titlebar />
      <Menubar />
      <Toolbars />
      <div className="flex min-h-0 grow">
        <DesignToolbox />
        <Workspace />
        <InstrumentStrip />
      </div>
      <div className="h-1 shrink-0 border-t border-[#a0a0a0]" />
      <SpreadsheetView />
      <StatusBar />
      <Taskbar />
    </div>
  );
}
